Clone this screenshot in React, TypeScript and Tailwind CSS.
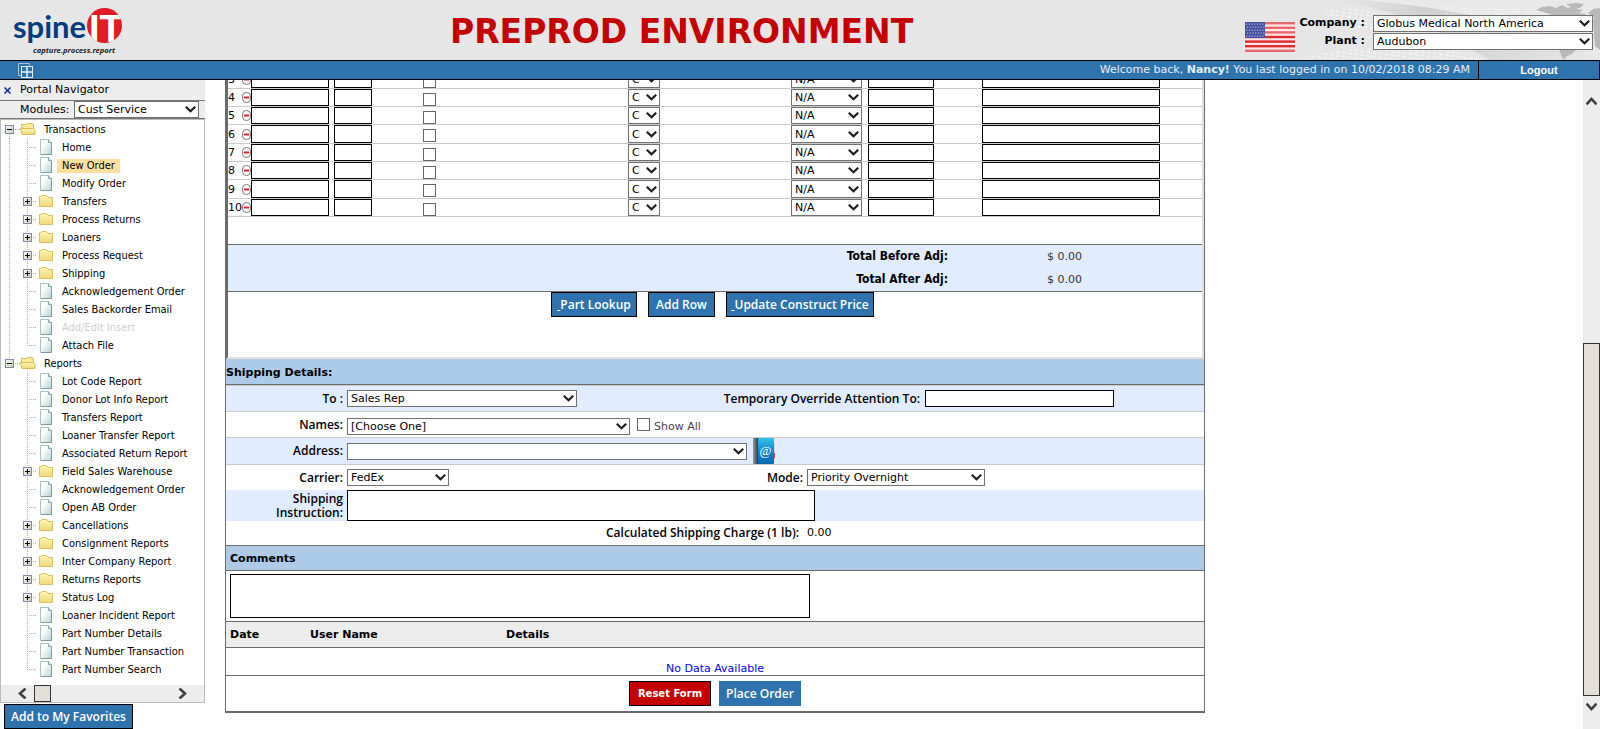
import React from "react";

const tahoma = "font-['DejaVu_Sans_Condensed','DejaVu_Sans',sans-serif]";
const treb = "font-['Open_Sans','Noto_Sans',sans-serif]";

type SelectProps = { id?: string; label?: string; options: string[]; className: string };

function Select({ id, label, options, className }: SelectProps) {
  return (
    <span className={`relative block ${className}`}>
      <select
        id={id}
        aria-label={label}
        className="block h-full w-full appearance-none rounded-none border border-[#707070] bg-white pl-[3px] pr-4 text-[11px] leading-[15px] text-black outline-none"
      >
        {options.map((o) => (
          <option key={o}>{o}</option>
        ))}
      </select>
      <svg className="pointer-events-none absolute inset-y-0 right-[3px] my-auto h-[7px] w-[11px]" viewBox="0 0 11 7" fill="none">
        <path d="M0.8 0.8 L5.5 5.2 L10.2 0.8" stroke="#1c1c1c" strokeWidth="2.2" />
      </svg>
    </span>
  );
}

const boxInput = "block rounded-none border border-black bg-white px-1 text-[11px] outline-none";
const checkbox = "block h-[13px] w-[13px] appearance-none rounded-none border border-[#666] bg-white checked:bg-[#2e73ad]";

function Logo() {
  return (
    <svg className="h-[58px] w-[130px]" viewBox="0 0 130 58" aria-label="spine IT capture.process.report">
      <defs>
        <clipPath id="disc">
          <circle cx="104.5" cy="24.5" r="17.5" />
        </clipPath>
      </defs>
      <text x="13" y="37" fontFamily="Lato, sans-serif" fontWeight="700" fontSize="31" fill="#023c7e">spine</text>
      <circle cx="104.5" cy="24.5" r="17.5" fill="#e31b23" />
      <g clipPath="url(#disc)">
        <text x="89" y="41" fontFamily="Liberation Sans, sans-serif" fontWeight="700" fontSize="38" fill="#fff">IT</text>
      </g>
      <text x="33" y="52" fontFamily="Open Sans, sans-serif" fontWeight="700" fontStyle="italic" fontSize="7.6" fill="#222">capture.process.report</text>
    </svg>
  );
}

function HeaderArt() {
  return (
    <svg className="absolute right-0 top-0 h-[60px] w-[300px]" viewBox="0 0 300 60" aria-hidden="true">
      <defs>
        <linearGradient id="sweep" x1="0" x2="1">
          <stop offset="0" stopColor="#d4d4d4" stopOpacity="0" />
          <stop offset="0.35" stopColor="#cfcfcf" />
          <stop offset="1" stopColor="#e8e9e8" />
        </linearGradient>
        <pattern id="dots" width="6" height="4" patternUnits="userSpaceOnUse" patternTransform="rotate(8)">
          <ellipse cx="3" cy="2" rx="1.8" ry="1" fill="#f6f6f6" />
        </pattern>
      </defs>
      <path d="M50 0 H300 V60 H190 C150 35 110 12 50 0Z" fill="#e8e9e8" />
      <path d="M60 0 C110 4 150 10 195 20 L300 45 V60 H190 C150 38 115 12 30 0Z" fill="url(#sweep)" />
      <path d="M20 12 C50 4 80 10 110 26 L60 30Z" fill="url(#dots)" />
      <path d="M0 58 C60 42 140 44 190 60 H0Z" fill="url(#dots)" />
      <path d="M130 5 C180 5 230 8 280 16 V20 H150Z" fill="url(#dots)" opacity="0.5" />
      <g fill="#b8b9b8">
        <path d="M236 10 L242 7 L250 6 L256 8 L262 5 L268 8 L274 6 L278 9 L283 10 L279 13 L286 14 L277 20 H258 L250 14 L243 12Z" />
        <path d="M266 4 L276 3 L284 4 L280 8 L273 8Z" />
        <path d="M288 13 L293 9 L300 8 V22 H294 V17Z" />
        <path d="M258 46 L264 48 L276 50 L272 54 L267 56 L264 60 L261 55Z" />
        <path d="M293 20 H300 V50 L295 46Z" />
      </g>
    </svg>
  );
}

function Flag() {
  const stars = [];
  for (let r = 0; r < 5; r++) for (let c = 0; c < 7; c++) stars.push(<rect key={`${r}-${c}`} x={1 + c * 2.7 + (r % 2)} y={1.5 + r * 3} width="1.2" height="1.2" fill="#b9bede" />);
  return (
    <svg className="h-[30px] w-[50px]" viewBox="0 0 50 30" role="img" aria-label="United States">
      <rect width="50" height="30" fill="#fbe9ea" />
      {[0, 1, 2, 3, 4, 5, 6].map((i) => (
        <rect key={i} y={i * 4.6} width="50" height="2.4" fill={i > 2 && i < 6 ? "#dd2a2c" : "#e8686a"} />
      ))}
      <rect width="20" height="16" fill="#4450a0" />
      {stars}
    </svg>
  );
}

type Kind = "file" | "folder";
type Node = { text: string; kind: Kind; state?: "on" | "off" };
const f = (text: string, state?: "on" | "off"): Node => ({ text, kind: "file", state });
const d = (text: string): Node => ({ text, kind: "folder" });

const transactions: Node[] = [
  f("Home"), f("New Order", "on"), f("Modify Order"), d("Transfers"), d("Process Returns"), d("Loaners"),
  d("Process Request"), d("Shipping"), f("Acknowledgement Order"), f("Sales Backorder Email"),
  f("Add/Edit Insert", "off"), f("Attach File"),
];
const reports: Node[] = [
  f("Lot Code Report"), f("Donor Lot Info Report"), f("Transfers Report"), f("Loaner Transfer Report"),
  f("Associated Return Report"), d("Field Sales Warehouse"), f("Acknowledgement Order"), f("Open AB Order"),
  d("Cancellations"), d("Consignment Reports"), d("Inter Company Report"), d("Returns Reports"), d("Status Log"),
  f("Loaner Incident Report"), f("Part Number Details"), f("Part Number Transaction"), f("Part Number Search"),
];

function Toggle({ x, open }: { x: number; open?: boolean }) {
  return (
    <g>
      <rect x={x + 0.5} y="4.5" width="8" height="8" fill="url(#tg)" stroke="#7b8ba8" />
      <path d={`M${x + 2} 8.5 h5`} stroke="#000" />
      {!open && <path d={`M${x + 4.5} 6 v5`} stroke="#000" />}
    </g>
  );
}

function Branch({ title, nodes, rail }: { title: string; nodes: Node[]; rail?: boolean }) {
  return (
    <li>
      <div className="flex h-[18px] items-center">
        <svg className="h-[18px] w-[42px] shrink-0" viewBox="0 0 42 18" aria-hidden="true">
          {!rail && <path d="M8.5 0 V5" stroke="#b0b0b0" strokeDasharray="1 1" />}
          {rail && <path d="M8.5 13 V18" stroke="#b0b0b0" strokeDasharray="1 1" />}
          <path d="M14 8.5 H20" stroke="#b0b0b0" strokeDasharray="1 1" />
          <Toggle x={4} open />
          <path d="M20.5 12.5 V3.5 H25 L26 2.5 H31.5 L32.5 4 V7" fill="#f8eb9c" stroke="#d9bd55" />
          <path d="M19.5 7.5 H32.5 L34 8.5 V13.5 H21Z" fill="url(#fd)" stroke="#d9bd55" />
        </svg>
        <a href="#" className="pl-px">{title}</a>
      </div>
      <ul>
        {nodes.map((n, i) => {
          const last = i === nodes.length - 1;
          return (
            <li key={i} className="flex h-[18px] items-center">
              <svg className="h-[18px] w-[56px] shrink-0" viewBox="0 0 56 18" aria-hidden="true">
                {rail && <path d="M8.5 0 V18" stroke="#b0b0b0" strokeDasharray="1 1" />}
                <path d={last ? "M26.5 0 V9" : "M26.5 0 V18"} stroke="#b0b0b0" strokeDasharray="1 1" />
                <path d="M28 8.5 H36" stroke="#b0b0b0" strokeDasharray="1 1" />
                {n.kind === "folder" ? (
                  <>
                    <Toggle x={22} />
                    <path d="M38.5 13.5 V3.5 H40 L41 2.5 H45.5 L47 4.5 H51.5 V13.5Z" fill="url(#fd)" stroke="#dcc060" />
                  </>
                ) : (
                  <>
                    <path d="M39.5 0.5 H47.5 L50.5 3.5 V15.5 H39.5Z" fill="url(#pg)" stroke="#a9c3c4" />
                    <path d="M47.5 0.5 V3.5 H50.5" fill="#e3eeee" stroke="#7fa3a5" />
                    <path d="M50.5 4 V15.5 H40" fill="none" stroke="#7d9a9c" />
                  </>
                )}
              </svg>
              <a
                href="#"
                className={`px-[5px] leading-[14px] ${n.state === "on" ? "bg-[#ffdf9c]" : ""} ${n.state === "off" ? "text-[#cfcfcf]" : ""}`}
              >
                {n.text}
              </a>
            </li>
          );
        })}
      </ul>
    </li>
  );
}

function Sidebar() {
  return (
    <aside className="flex w-[205px] shrink-0 flex-col items-start">
      <div className="flex h-5 w-full items-center gap-[9px] bg-[#ededed]">
        <button type="button" aria-label="Close navigator" className="ml-1 block">
          <svg className="block h-[7px] w-[7px]" viewBox="0 0 7 7"><path d="M0.5 0.5 L6.5 6.5 M6.5 0.5 L0.5 6.5" stroke="#0a2a8a" strokeWidth="1.5" /></svg>
        </button>
        <span className="text-[11px]">Portal Navigator</span>
      </div>
      <div className="flex h-[19px] w-full items-center border-y border-[#777] bg-[#ededed] pl-5">
        <label htmlFor="modules" className="w-[54px] text-[11px] leading-[19px]">Modules:</label>
        <Select id="modules" options={["Cust Service"]} className="h-[17px] w-[125px]" />
      </div>
      <nav className={`w-full border border-[#bbb] text-[11px] leading-[14px] text-black ${tahoma}`}>
        <svg className="absolute h-0 w-0" aria-hidden="true">
          <defs>
            <linearGradient id="tg" x2="1" y2="1"><stop stopColor="#fff" /><stop offset="1" stopColor="#c9c5b8" /></linearGradient>
            <linearGradient id="fd" x2="0" y2="1"><stop stopColor="#fdf6b4" /><stop offset="1" stopColor="#f0d878" /></linearGradient>
            <linearGradient id="pg" x2="1" y2="1"><stop offset="0.3" stopColor="#fff" /><stop offset="1" stopColor="#b5d4d4" /></linearGradient>
          </defs>
        </svg>
        <ul className="pb-[6px] pt-px">
          <Branch title="Transactions" nodes={transactions} rail />
          <Branch title="Reports" nodes={reports} />
        </ul>
        <div className="flex h-[17px] items-center bg-[#ededed] pl-4 pr-4">
          <svg className="h-[11px] w-[10px]" viewBox="0 0 10 11" fill="none"><path d="M8.5 0.5 L3 5.5 L8.5 10.5" stroke="#404040" strokeWidth="2.6" /></svg>
          <span className="ml-[7px] h-[17px] w-[17px] border border-[#333] bg-[#e3dfd8]" />
          <svg className="ml-auto h-[11px] w-[10px]" viewBox="0 0 10 11" fill="none"><path d="M1.5 0.5 L7 5.5 L1.5 10.5" stroke="#404040" strokeWidth="2.6" /></svg>
        </div>
      </nav>
      <button type="button" className={`ml-1 mt-px h-[25px] w-[129px] border border-black bg-[#2e73ad] text-[12px] font-semibold leading-[14px] text-white ${treb}`}>
        Add to My Favorites
      </button>
    </aside>
  );
}

const rows = [3, 4, 5, 6, 7, 8, 9, 10];

function LineItems() {
  return (
    <table className="w-full table-fixed border-separate border-spacing-0 text-[11px]">
      <colgroup>
        <col className="w-[23px]" />
        <col className="w-[83px]" />
        <col className="w-[89px]" />
        <col className="w-[205px]" />
        <col className="w-[163px]" />
        <col className="w-[77px]" />
        <col className="w-[114px]" />
        <col />
      </colgroup>
      <tbody className="[&_td]:border-b [&_td]:border-[#ccc] [&_td]:p-0 [&_td]:align-top">
        {rows.map((n) => {
          const h = n === 6 || n === 9 ? "h-[18px]" : "h-[17px]";
          return (
            <tr key={n}>
              <td>
                <div className={`flex items-center justify-between leading-[19px] ${h}`}>
                  <span className="w-[14px] whitespace-nowrap">{n}</span>
                  <button type="button" aria-label={`Remove row ${n}`} className="block shrink-0">
                    <svg className="block h-[11px] w-[9px]" viewBox="0 0 9 11">
                      <rect x="0.5" y="0.5" width="8" height="10" rx="3.8" fill="#fff" stroke="#777" />
                      <path d="M1.8 5.5 h5.4" stroke="#d8232a" strokeWidth="2" />
                    </svg>
                  </button>
                </div>
              </td>
              <td><input aria-label={`Part number ${n}`} className={`${boxInput} w-[78px] ${h}`} /></td>
              <td><input aria-label={`Quantity ${n}`} className={`${boxInput} w-[38px] ${h}`} /></td>
              <td><input type="checkbox" aria-label={`Select row ${n}`} className={`${checkbox} mt-1`} /></td>
              <td><Select label={`Type ${n}`} options={["C"]} className={`w-8 ${h}`} /></td>
              <td><Select label={`Adjustment ${n}`} options={["N/A"]} className={`w-[71px] ${h}`} /></td>
              <td><input aria-label={`Amount ${n}`} className={`${boxInput} w-[66px] ${h}`} /></td>
              <td><input aria-label={`Note ${n}`} className={`${boxInput} w-[178px] ${h}`} /></td>
            </tr>
          );
        })}
      </tbody>
    </table>
  );
}

const blueButton = `h-[25px] bg-[#2e73ad] text-[12px] font-semibold leading-[14px] text-white ${treb}`;
const fieldLabel = `text-right text-[12px] font-semibold leading-[14px] text-black ${treb}`;
const totalLabel = `text-right text-[12px] font-bold ${tahoma}`;

function OrderForm() {
  return (
    <form className="-mt-[9px] w-full max-w-[980px] border border-b-2 border-t-0 border-[#6b6b6b]" onSubmit={(e) => e.preventDefault()}>
      <section className="border-2 border-t-0 border-b-[#e0e0e0] border-l-[#6b6b6b] border-r-[#e0e0e0]">
        <LineItems />
        <dl className="mt-[27px] grid grid-cols-[720px_1fr] border-y border-[#6b6b6b] bg-[#e1edff] text-[11px] leading-[23px]">
          <dt className={`${totalLabel} leading-[23px]`}>Total Before Adj:</dt>
          <dd className="pl-[99px] text-[#333]">$ 0.00</dd>
          <dt className={`${totalLabel} leading-[23px]`}>Total After Adj:</dt>
          <dd className="pl-[99px] text-[#333]">$ 0.00</dd>
        </dl>
        <div className="flex justify-center gap-[11px] pb-10 pr-[5px]">
          <button type="button" className={`${blueButton} w-[86px] border border-black`}><u>&nbsp;</u>Part Lookup</button>
          <button type="button" className={`${blueButton} w-[67px] border border-black`}>Add Row</button>
          <button type="button" className={`${blueButton} w-[148px] border border-black`}><u>&nbsp;</u>Update Construct Price</button>
        </div>
      </section>

      <h2 className="h-[26px] border-b border-[#6b6b6b] bg-[#adcbe7] text-[11px] font-bold leading-[27px]">Shipping Details:</h2>
      <div className="grid h-[27px] grid-cols-[117px_371px_1fr] items-center gap-x-1 border-y border-[#ccc] bg-[#e1edff]">
        <label htmlFor="to" className={fieldLabel}>To :</label>
        <Select id="to" options={["Sales Rep"]} className="h-[17px] w-[230px]" />
        <div className="flex items-center gap-[5px]">
          <label htmlFor="attn" className={`${fieldLabel} w-[198px] whitespace-nowrap`}>Temporary Override Attention To:</label>
          <input id="attn" className={`${boxInput} h-[17px] w-[189px]`} />
        </div>
      </div>
      <div className="flex h-[26px] items-center gap-1 border-b border-[#ccc]">
        <label htmlFor="names" className={`${fieldLabel} w-[117px]`}>Names:</label>
        <Select id="names" options={["[Choose One]"]} className="mt-1 h-[17px] w-[283px]" />
        <input type="checkbox" id="all" className={`${checkbox} ml-[3px]`} />
        <label htmlFor="all" className="pt-1 text-[11px] leading-[18px] text-[#444]">Show All</label>
      </div>
      <div className="flex h-[27px] items-center gap-1 border-b border-[#ccc] bg-[#e1edff]">
        <label htmlFor="address" className={`${fieldLabel} w-[117px]`}>Address:</label>
        <Select id="address" options={[""]} className="h-[17px] w-[400px]" />
        <button type="button" aria-label="Address book" className="ml-px block">
          <svg className="block h-[26px] w-[24px]" viewBox="0 0 24 26">
            <defs>
              <linearGradient id="bk" x2="0" y2="1"><stop stopColor="#33c3ee" /><stop offset="0.5" stopColor="#1488cf" /><stop offset="1" stopColor="#0566ad" /></linearGradient>
              <linearGradient id="sp"><stop stopColor="#9a9a9a" /><stop offset="1" stopColor="#1d2730" /></linearGradient>
            </defs>
            <rect x="20" y="5" width="3" height="16" fill="#cfd4da" />
            <rect x="21" y="15" width="2" height="5" fill="#d84a4a" />
            <rect x="1" width="6" height="26" fill="url(#sp)" />
            <rect x="6" width="16" height="26" rx="1" fill="url(#bk)" />
            <text x="7.5" y="17" fontFamily="Liberation Serif, serif" fontSize="13" fill="#fff">@</text>
          </svg>
        </button>
      </div>
      <div className="grid h-[25px] grid-cols-[117px_400px_1fr] items-center gap-x-1">
        <label htmlFor="carrier" className={fieldLabel}>Carrier:</label>
        <Select id="carrier" options={["FedEx"]} className="h-[17px] w-[102px]" />
        <div className="flex items-center gap-1">
          <label htmlFor="mode" className={`${fieldLabel} w-[52px]`}>Mode:</label>
          <Select id="mode" options={["Priority Overnight"]} className="h-[17px] w-[178px]" />
        </div>
      </div>
      <div className="flex h-[31px] gap-1 bg-[#e1edff]">
        <label htmlFor="instr" className={`${fieldLabel} flex w-[117px] flex-col pt-[2px]`}><span>Shipping</span><span>Instruction:</span></label>
        <textarea id="instr" className={`${boxInput} h-[31px] w-[468px] resize-none`} />
      </div>
      <div className="flex h-6 items-center gap-2 text-[11px]">
        <span className={`${fieldLabel} w-[573px]`}>Calculated Shipping Charge (1 lb):</span>
        <output>0.00</output>
      </div>

      <h2 className="h-[26px] border-y border-[#6b6b6b] bg-[#adcbe7] pl-1 text-[11px] font-bold leading-[26px]">
        <label htmlFor="comments">Comments</label>
      </h2>
      <div className="px-1 pb-[3px] pt-[3px]">
        <textarea id="comments" className={`${boxInput} h-11 w-[580px] resize-none`} />
      </div>
      <table className="w-full table-fixed border-separate border-spacing-0 text-[11px]">
        <thead>
          <tr className="bg-[#ededed] text-left [&>th]:h-[27px] [&>th]:border-y [&>th]:border-[#6b6b6b] [&>th]:pb-0 [&>th]:pl-1 [&>th]:pr-0 [&>th]:pt-[2px]">
            <th className="w-[80px]">Date</th>
            <th className="w-[196px]">User Name</th>
            <th>Details</th>
          </tr>
        </thead>
        <tbody>
          <tr>
            <td colSpan={3} className="h-[28px] border-b border-[#6b6b6b] p-0 text-center align-bottom leading-[13px] text-[#0000ff]">No Data Available</td>
          </tr>
        </tbody>
      </table>
      <div className="flex justify-center gap-2 pb-[5px] pt-[5px]">
        <button type="reset" className="h-[25px] w-[82px] border border-black bg-[#c40000] text-[10px] font-bold text-white">Reset Form</button>
        <button type="submit" className={`${blueButton} w-[82px]`}>Place Order</button>
      </div>
    </form>
  );
}

export default function App() {
  return (
    <div className="flex h-screen flex-col overflow-hidden bg-white font-['DejaVu_Sans',Verdana,sans-serif] text-black">
      <header className="relative grid h-[60px] shrink-0 grid-cols-[450px_1fr_auto] items-center bg-[#e6e6e6]">
        <HeaderArt />
        <Logo />
        <h1 className="whitespace-nowrap pt-1 text-[33px] font-bold leading-[40px] text-[#c40000]">PREPROD ENVIRONMENT</h1>
        <div className="relative flex items-center justify-end gap-1 pr-[7px] pt-1">
          <div className="pt-[10px]"><Flag /></div>
          <div className="grid grid-cols-[auto_220px] items-center gap-x-2 gap-y-px text-right text-[11px] font-bold">
            <label htmlFor="company">Company :</label>
            <Select id="company" options={["Globus Medical North America"]} className="h-[17px] font-normal" />
            <label htmlFor="plant">Plant :</label>
            <Select id="plant" options={["Audubon"]} className="h-[17px] font-normal" />
          </div>
        </div>
      </header>
      <div className="flex h-5 shrink-0 items-stretch border-y border-r border-black bg-[#2e73ad] text-[11px] text-white">
        <button type="button" aria-label="Windows" className="ml-[18px]">
          <svg className="h-[15px] w-[15px]" viewBox="0 0 15 15" fill="none" stroke="#e5eef6">
            <path d="M3 12.5 H0.5 V0.5 H11.5 V2.5" stroke="#a9c8e2" />
            <rect x="3.5" y="3.5" width="11" height="11" />
            <path d="M9 4 V14 M4 9 H14" strokeWidth="1.6" />
          </svg>
        </button>
        <p className="ml-auto pr-2 leading-[18px] text-[#e6eef5]">
          Welcome back, <b>Nancy!</b> You last logged in on 10/02/2018 08:29 AM
        </p>
        <a href="#" className="w-[121px] border-l border-black text-center font-['Liberation_Sans',sans-serif] text-[11px] font-bold leading-[18px]">Logout</a>
      </div>
      <div className="flex min-h-0 flex-1">
        <Sidebar />
        <main className="min-w-0 flex-1 overflow-hidden pl-5">
          <OrderForm />
        </main>
        <div className="flex w-[17px] shrink-0 flex-col items-center bg-[#ededed]" aria-hidden="true">
          <svg className="mt-4 h-[10px] w-[11px] shrink-0" viewBox="0 0 11 10" fill="none"><path d="M0.5 8.5 L5.5 3 L10.5 8.5" stroke="#404040" strokeWidth="2.6" /></svg>
          <span className="mt-[237px] w-[17px] flex-1 border border-[#333] bg-[#e3dfd8]" />
          <svg className="mb-[17px] mt-[6px] h-[10px] w-[11px] shrink-0" viewBox="0 0 11 10" fill="none"><path d="M0.5 1.5 L5.5 7 L10.5 1.5" stroke="#404040" strokeWidth="2.6" /></svg>
        </div>
      </div>
    </div>
  );
}
